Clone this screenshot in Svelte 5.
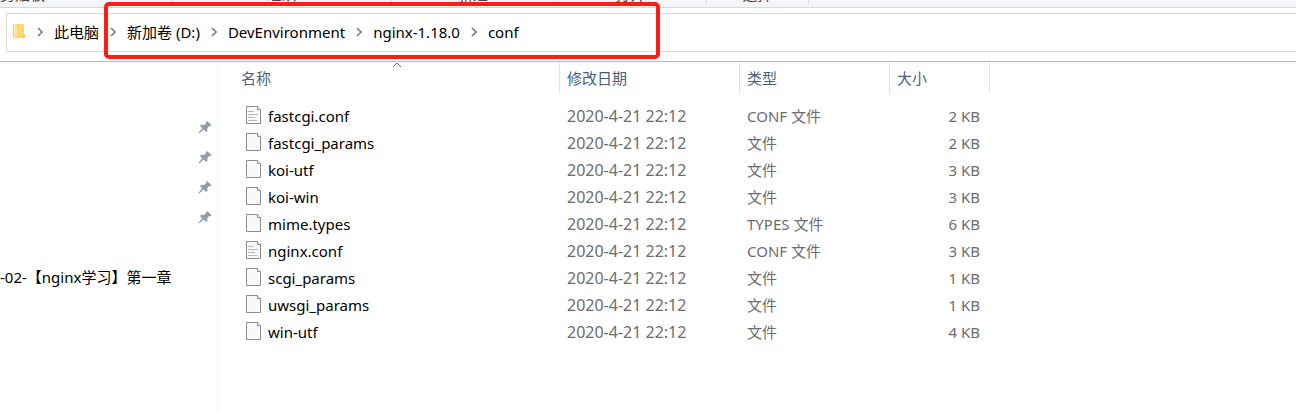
<script>
  const groups = [
    { name: '剪贴板', width: 172 },
    { name: '组织', width: 220 },
    { name: '新建', width: 163 },
    { name: '打开', width: 152 },
    { name: '选择', width: 102 },
  ];
  const path = ['新加卷 (D:)', 'DevEnvironment', 'nginx-1.18.0', 'conf'];
  const pins = [1, 2, 3, 4];
  const files = [
    ['fastcgi.conf', 'CONF 文件', '2 KB'],
    ['fastcgi_params', '文件', '2 KB'],
    ['koi-utf', '文件', '3 KB'],
    ['koi-win', '文件', '3 KB'],
    ['mime.types', 'TYPES 文件', '6 KB'],
    ['nginx.conf', 'CONF 文件', '3 KB'],
    ['scgi_params', '文件', '1 KB'],
    ['uwsgi_params', '文件', '1 KB'],
    ['win-utf', '文件', '4 KB'],
  ];
</script>

{#snippet chevron()}
  <svg class="chevron" width="6" height="10" viewBox="0 0 6 10" aria-hidden="true">
    <path d="M1 1l4 4-4 4" fill="none" stroke="#7d7d7d" stroke-width="1.7" />
  </svg>
{/snippet}

<div class="explorer">
  <header class="ribbon">
    {#each groups as group}
      <div class="group" style="width: {group.width}px"><span>{group.name}</span></div>
    {/each}
  </header>

  <nav class="address" aria-label="地址">
    <svg class="folder" width="14" height="18" viewBox="0 0 14 18" aria-hidden="true">
      <path d="M3 1h9v14H3z" fill="#f8d775" />
      <path d="M11 11h2v4h-2z" fill="#f5cd68" />
      <path d="M1 1l4 2v14l-4-2z" fill="#ffe79b" />
      <path d="M1 1h1v14H1z" fill="#f3cf70" />
    </svg>
    {@render chevron()}
    <a href="#pc">此电脑</a>
    <div class="crumbs">
      {#each path as part}
        {@render chevron()}
        <a href="#{part}">{part}</a>
      {/each}
      <div class="mark"></div>
    </div>
  </nav>

  <div class="body">
    <aside>
      {#each pins as pin (pin)}
        <div class="pin">
          <svg width="14" height="14" viewBox="0 0 14 14" aria-hidden="true">
            <path d="M9 1l4.500 4-1 1.200-1.300-.2-2 2.200.3 2.500-1.300 1.300-2.600-2.500L1.200 13.500l-.7-.7L4.200 8.200 2 6l1.200-1.300 2.900.2L8.300 3 8 2z" fill="#929da7" />
          </svg>
        </div>
      {/each}
      <a class="recent" href="#recent">-02-【nginx学习】第一章</a>
    </aside>

    <main>
      <table>
        <colgroup><col class="c-name" /><col class="c-date" /><col class="c-type" /><col class="c-size" /></colgroup>
        <thead>
          <tr>
            <th>名称
              <svg class="sort" width="10" height="6" viewBox="0 0 10 6" aria-hidden="true">
                <path d="M1 5l4-4 4 4" fill="none" stroke="#6b6b6b" />
              </svg>
            </th>
            <th>修改日期</th>
            <th>类型</th>
            <th>大小</th>
          </tr>
        </thead>
        <tbody>
          {#each files as [name, type, size]}
            <tr>
              <td class="name">
                <div class="file">
                  <svg width="15" height="18" viewBox="0 0 15 18" aria-hidden="true">
                    <path d="M.5.5h11l3 3v14H.5z" fill="#f8f9fa" stroke="#8c8c8c" />
                    <path d="M11.500.5v3h3" fill="#fff" stroke="#8c8c8c" />
                    {#if name.endsWith('.conf')}
                      <path d="M2 5.500h6M2 8.500h10M2 11.500h7M2 14.500h9" stroke="#b8b8b8" />
                    {/if}
                  </svg>
                  <span>{name}</span>
                </div>
              </td>
              <td class="date">2020-4-21 22:12</td>
              <td>{type}</td>
              <td class="size">{size}</td>
            </tr>
          {/each}
        </tbody>
      </table>
    </main>
  </div>
</div>

<style>
  :global(body) {
    margin: 0;
    background: #fff;
  }
  .explorer {
    font: 15px/20px "Noto Sans", "Noto Sans CJK SC", sans-serif;
    color: #000;
    min-height: 100vh;
    display: flex;
    flex-direction: column;
    overflow: hidden;
  }
  a {
    color: inherit;
    text-decoration: none;
    white-space: nowrap;
  }
  .ribbon {
    display: flex;
    align-items: flex-start;
    height: 7px;
    background: #f4f5f7;
    border-bottom: 1px solid #d9d9d9;
    overflow: hidden;
  }
  /* The ribbon is scrolled up: only the feet of its labels remain in view. */
  .group {
    box-sizing: border-box;
    display: flex;
    align-items: flex-end;
    justify-content: center;
    flex: none;
    height: 24px;
    margin-top: -20px;
    padding-bottom: 2px;
    border-right: 1px solid #dcdddf;
    line-height: 16px;
    color: #444;
  }
  .group:first-child {
    justify-content: flex-start;
  }
  .address {
    box-sizing: border-box;
    display: flex;
    align-items: center;
    height: 39px;
    margin: 5px 0 9px 6px;
    padding: 0 0 2px 5px;
    border: 1px solid #d9d9d9;
    border-right: 0;
  }
  .chevron {
    flex: none;
    margin: 0 11px;
  }
  .crumbs {
    position: relative;
    display: flex;
    align-items: center;
    align-self: stretch;
  }
  .mark {
    position: absolute;
    inset: -12px -141px -10px 5px;
    border: 4px solid #fe1d12;
    border-radius: 5px;
    pointer-events: none;
  }
  .body {
    display: flex;
    flex: 1;
    border-top: 1px solid #b9b9b9;
  }
  aside {
    box-sizing: border-box;
    flex: none;
    width: 218px;
    padding-top: 50px;
    border-right: 1px solid #f2f2f2;
  }
  .pin {
    display: flex;
    align-items: center;
    justify-content: flex-end;
    height: 30px;
    padding-right: 5px;
  }
  .recent {
    display: block;
    margin-top: 30px;
    line-height: 30px;
  }
  main {
    flex: 1;
    padding-left: 16px;
  }
  table {
    width: 756px;
    table-layout: fixed;
    border-collapse: separate;
    border-spacing: 0;
    color: #6d6d6d;
  }
  .c-name { width: 326px; }
  .c-date { width: 180px; }
  .c-type { width: 150px; }
  .c-size { width: 100px; }
  th {
    position: relative;
    height: 32px;
    padding: 0 7px;
    border-right: 1px solid #e5e5e5;
    font-weight: 400;
    text-align: left;
    color: #4c607a;
  }
  .sort {
    position: absolute;
    top: 0;
    left: 50%;
    margin-left: -5px;
  }
  tbody::before {
    content: "";
    display: block;
    height: 8px;
  }
  td {
    height: 27px;
    padding: 0 10px 0 7px;
    white-space: nowrap;
  }
  .name {
    padding-left: 12px;
    color: #000;
  }
  .date {
    font-size: 16px;
  }
  .size {
    text-align: right;
  }
  .file {
    display: flex;
    align-items: center;
    gap: 7px;
  }
  .file svg {
    flex: none;
    margin-bottom: 2px;
  }
</style>
